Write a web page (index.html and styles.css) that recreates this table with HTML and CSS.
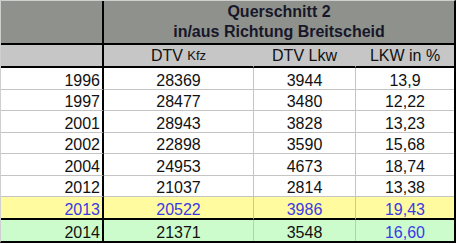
FILE: index.html
```html
<!DOCTYPE html>
<html lang="de">

<head>
    <meta charset="UTF-8">
    <meta name="viewport" content="width=device-width, initial-scale=1.0">
    <title>Querschnitt 2</title>
    <link rel="stylesheet" href="styles.css">
</head>

<body>
    <div class="sheet">
        <div class="cell head corner"></div>
        <div class="cell head title">Querschnitt 2<br>in/aus Richtung Breitscheid</div>

        <div class="cell sub corner"></div>
        <div class="cell sub">DTV&nbsp;<small>Kfz</small></div>
        <div class="cell sub">DTV Lkw</div>
        <div class="cell sub last">LKW in %</div>

        <div class="cell year r1">1996</div>
        <div class="cell r1">28369</div>
        <div class="cell r1">3944</div>
        <div class="cell r1 last">13,9</div>

        <div class="cell year r2">1997</div>
        <div class="cell r2">28477</div>
        <div class="cell r2">3480</div>
        <div class="cell r2 last">12,22</div>

        <div class="cell year r1">2001</div>
        <div class="cell r1">28943</div>
        <div class="cell r1">3828</div>
        <div class="cell r1 last">13,23</div>

        <div class="cell year r2">2002</div>
        <div class="cell r2">22898</div>
        <div class="cell r2">3590</div>
        <div class="cell r2 last">15,68</div>

        <div class="cell year r1">2004</div>
        <div class="cell r1">24953</div>
        <div class="cell r1">4673</div>
        <div class="cell r1 last">18,74</div>

        <div class="cell year r2">2012</div>
        <div class="cell r2">21037</div>
        <div class="cell r2">2814</div>
        <div class="cell r2 last">13,38</div>

        <div class="cell year yellow blue">2013</div>
        <div class="cell yellow blue">20522</div>
        <div class="cell yellow blue">3986</div>
        <div class="cell yellow blue last">19,43</div>

        <div class="cell year green end">2014</div>
        <div class="cell green end">21371</div>
        <div class="cell green end">3548</div>
        <div class="cell green end blue last">16,60</div>
    </div>
</body>

</html>
```

FILE: styles.css
```css
html,
body {
    margin: 0;
    padding: 0;
    background: #fff;
}

.sheet {
    display: grid;
    grid-template-columns: 103px 150px 102px 98px;
    grid-template-rows: 44px 23px 22px 21px 22px 21px 22px 21px 23px 21px;
    width: 456px;
    box-sizing: border-box;
    border-top: 1px solid #cfcfcf;
    border-left: 1px solid #cfcfcf;
    border-right: 2px solid #000;
    border-bottom: 2px solid #000;
    font-family: "Liberation Sans", Arial, sans-serif;
    font-size: 16px;
    color: #111;
}

.cell {
    box-sizing: border-box;
    display: flex;
    align-items: flex-end;
    justify-content: center;
    line-height: 16px;
    border-right: 1px solid #c4c4c4;
    border-bottom: 1px solid #c4c4c4;
    background: #fff;
}

.cell.last {
    border-right: none;
}

.year {
    justify-content: flex-end;
    padding-right: 2px;
    border-right: 2px solid #000;
}

.head {
    background: #8f918c;
    border-bottom: 2px solid #000;
}

.corner {
    border-right: 2px solid #000;
}

.title {
    grid-column: 2 / 5;
    border-right: none;
    display: block;
    text-align: center;
    font-weight: bold;
    line-height: 20px;
    padding-top: 1px;
    color: #17172a;
}

.sub {
    background: #c6c6c6;
    border-bottom: 2px solid #000;
    border-right-color: #c6c6c6;
    align-items: center;
    line-height: 21px;
}

.sub.corner {
    border-right: 2px solid #000;
}

.sub small {
    font-size: 13px;
}

.yellow {
    background: #fffb9e;
    border-bottom: 2px solid #000;
}

.green {
    background: #ccfccc;
}

.end {
    border-bottom: none;
}

.year.yellow,
.year.green {
    border-right: 2px solid #000;
}

.blue {
    color: #3a3ae6;
}
```
